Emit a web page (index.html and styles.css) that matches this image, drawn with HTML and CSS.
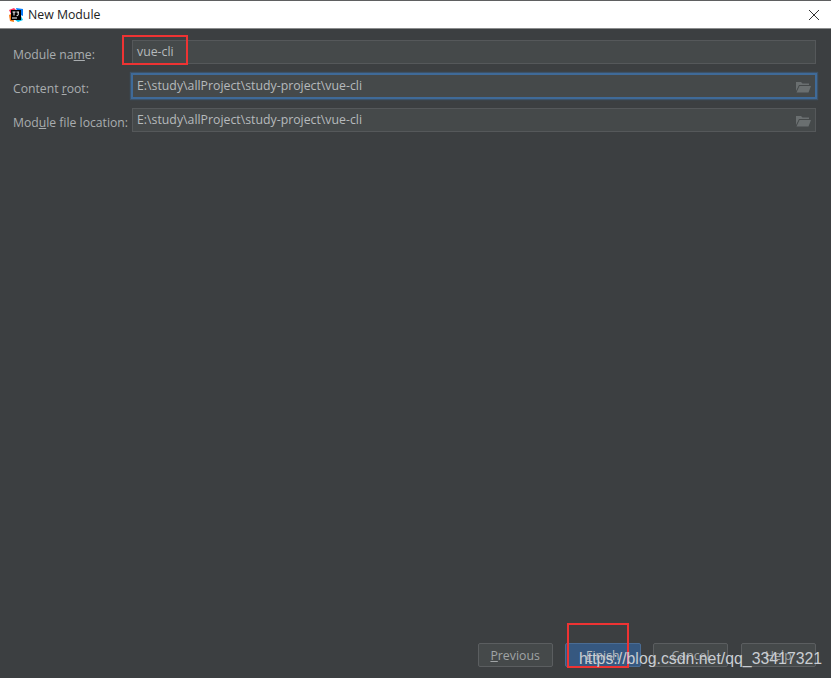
FILE: index.html
```html
<!DOCTYPE html>
<html lang="en">
<head>
  <meta charset="UTF-8" />
  <title>New Module</title>
  <link rel="stylesheet" href="styles.css">
</head>
<body>
  <div class="dialog">

    <!-- TITLE BAR -->
    <div class="titlebar">
      <svg class="app-icon" width="16" height="16" viewBox="0 0 16 16">
        <path d="M1 3 L6 1 L9 4 L4 9 Z" fill="#fe315d"/>
        <path d="M1 8 L5 6 L6 15 L2 14 Z" fill="#f97a12"/>
        <path d="M8 1 L15 2 L15 9 L10 7 Z" fill="#087cfa"/>
        <path d="M6 12 L13 9 L15 13 L10 15 Z" fill="#07c3f2"/>
        <rect x="3" y="3" width="10" height="10" fill="#000"/>
        <rect x="4" y="10.5" width="5" height="1" fill="#fff"/>
        <path d="M4.5 5 H7.5 M6 5 V8.5 M8.5 5 H11 M10.2 5 V8 Q10.2 8.9 8.6 8.6" stroke="#fff" stroke-width="1" fill="none"/>
      </svg>
      <span class="title">New Module</span>
      <svg class="close" width="12" height="12" viewBox="0 0 12 12">
        <path d="M1 1 L11 11 M11 1 L1 11" stroke="#333" stroke-width="1" fill="none"/>
      </svg>
    </div>

    <!-- FORM + BUTTONS -->
    <div class="content">
      <div class="form">
        <label class="label">Module na<u>m</u>e:</label>
        <div class="field"><span>vue-cli</span></div>

        <label class="label">Content <u>r</u>oot:</label>
        <div class="field focused">
          <span>E:\study\allProject\study-project\vue-cli</span>
          <svg class="folder" width="15" height="12" viewBox="0 0 15 12">
            <path d="M0 1 H5 L6.5 2.5 H13 V4 H3 L0 10 Z" fill="#6a6f70"/>
            <path d="M3.5 5 H15 L12.5 11.5 H0.5 Z" fill="#6a6f70"/>
          </svg>
        </div>

        <label class="label">Mod<u>u</u>le file location:</label>
        <div class="field">
          <span>E:\study\allProject\study-project\vue-cli</span>
          <svg class="folder" width="15" height="12" viewBox="0 0 15 12">
            <path d="M0 1 H5 L6.5 2.5 H13 V4 H3 L0 10 Z" fill="#6a6f70"/>
            <path d="M3.5 5 H15 L12.5 11.5 H0.5 Z" fill="#6a6f70"/>
          </svg>
        </div>
      </div>

      <div class="buttons">
        <button class="btn"><u>P</u>revious</button>
        <button class="btn primary"><u>F</u>inish</button>
        <button class="btn">Cancel</button>
        <button class="btn">Help</button>
      </div>
    </div>
  </div>

  <!-- red annotations and blog watermark on top of the screenshot -->
  <div class="mark mark-name"></div>
  <div class="mark mark-finish"></div>
  <div class="watermark">https://blog.csdn.net/qq_33417321</div>
</body>
</html>
```

FILE: styles.css
```css
/* ------------------------------
   GENERAL
-------------------------------*/
html, body {
  margin: 0;
  padding: 0;
  height: 100%;
  overflow: hidden;
}
body {
  position: relative;
  font-family: "Open Sans", "Noto Sans", sans-serif;
  background: #3c3f41;
}

.dialog {
  height: 678px;
  box-sizing: border-box;
  display: flex;
  flex-direction: column;
  border-top: 1px solid #5f6061;
}

/* ---------------
   TITLE BAR
   ---------------*/
.titlebar {
  height: 28px;
  flex: none;
  box-sizing: border-box;
  display: flex;
  align-items: center;
  padding: 0 11px 0 8px;
  background: #fff;
  border-bottom: 1px solid #8b8c8d;
}
.title {
  margin-left: 4px;
  font-size: 12.3px;
  color: #222;
}
.close {
  margin-left: auto;
}

/* ---------------
   FORM
   ---------------*/
.content {
  flex: 1;
  display: flex;
  flex-direction: column;
  justify-content: space-between;
  padding: 11px 15px 11px 13px;
}
.form {
  display: grid;
  grid-template-columns: 119px 1fr;
  grid-template-rows: 24px 24px 24px;
  row-gap: 10px;
  align-items: center;
}
.label {
  font-size: 12.2px;
  color: #a9adaf;
  padding-top: 5px;
}
.field {
  height: 24px;
  box-sizing: border-box;
  display: flex;
  align-items: center;
  justify-content: space-between;
  padding: 0 4px 2px 4px;
  background: #45494a;
  border: 1px solid #55585a;
  font-size: 12.3px;
  color: #b6babc;
}
.field.focused {
  height: 26px;
  margin: 0 -1px;
  padding: 0 4px 2px 4px;
  border: 2px solid #3f6a98;
  box-shadow: 0 0 1px 1px rgba(63, 106, 152, 0.45);
}
.folder {
  margin-top: 3px;
}

/* ---------------
   BUTTONS
   ---------------*/
.buttons {
  display: flex;
  justify-content: flex-end;
  gap: 12.5px;
}
.btn {
  width: 75.25px;
  height: 24px;
  padding: 0;
  font: 12.3px "Open Sans", "Noto Sans", sans-serif;
  color: #a0a4a6;
  background: #45494a;
  border: 1px solid #5b5e60;
  border-radius: 2px;
}
.btn.primary {
  color: #b9bdbf;
  background: #365880;
  border-color: #4a6c94;
}

/* ---------------
   OVERLAYS
   ---------------*/
.mark {
  position: absolute;
  box-sizing: border-box;
  border: 2px solid #ee3333;
}
.mark-name {
  left: 122px;
  top: 35px;
  width: 66px;
  height: 30px;
}
.mark-finish {
  left: 567px;
  top: 623px;
  width: 62px;
  height: 45px;
}
.watermark {
  position: absolute;
  left: 579px;
  top: 650px;
  font-family: "Liberation Sans", sans-serif;
  font-size: 15.85px;
  color: #c9cdd2;
  white-space: nowrap;
}
```
